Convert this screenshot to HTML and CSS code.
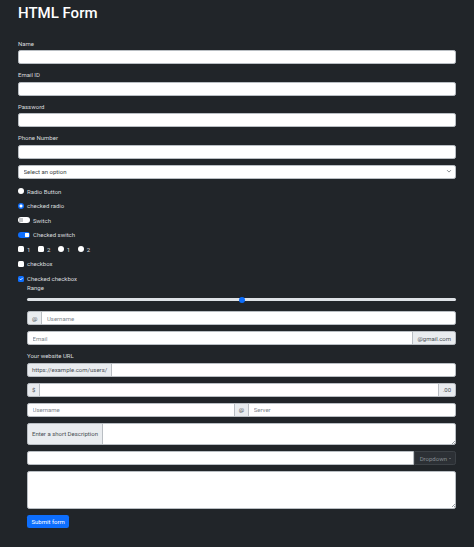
FILE: index.html
```html
<!DOCTYPE html>
<html lang="en">
<head>
<meta charset="utf-8">
<title>HTML Form</title>
<link rel="stylesheet" href="styles.css">
</head>
<body>
<div class="page">
  <h1 class="title">HTML Form</h1>
  <form class="form" onsubmit="return false">
    <div class="field">
      <label class="label" for="name">Name</label>
      <input class="control" id="name" type="text">
    </div>
    <div class="field">
      <label class="label" for="email">Email ID</label>
      <input class="control" id="email" type="email">
    </div>
    <div class="field">
      <label class="label" for="pw">Password</label>
      <input class="control" id="pw" type="password">
    </div>
    <div class="field">
      <label class="label" for="phone">Phone Number</label>
      <input class="control" id="phone" type="tel">
    </div>
    <div class="field field-select">
      <div class="select-wrap">
        <select class="control select">
          <option>Select an option</option>
          <option>One</option>
          <option>Two</option>
        </select>
        <svg class="chevron" viewBox="0 0 16 16" aria-hidden="true"><path d="M2 5l6 6 6-6" fill="none" stroke="#343a40" stroke-width="2" stroke-linecap="round" stroke-linejoin="round"/></svg>
      </div>
    </div>

    <div class="check">
      <input class="box radio" type="radio" name="r1" id="r1">
      <label for="r1">Radio Button</label>
    </div>
    <div class="check">
      <input class="box radio is-on" type="radio" name="r1" id="r2" checked>
      <label for="r2">checked radio</label>
    </div>
    <div class="check check-switch">
      <input class="switch" type="checkbox" id="s1">
      <label for="s1">Switch</label>
    </div>
    <div class="check check-switch">
      <input class="switch is-on" type="checkbox" id="s2" checked>
      <label for="s2">Checked switch</label>
    </div>
    <div class="check inline">
      <span class="inline-item"><input class="box" type="checkbox" id="i1"><label for="i1">1</label></span>
      <span class="inline-item"><input class="box" type="checkbox" id="i2"><label for="i2">2</label></span>
      <span class="inline-item"><input class="box radio" type="radio" name="ir" id="i3"><label for="i3">1</label></span>
      <span class="inline-item"><input class="box radio" type="radio" name="ir" id="i4"><label for="i4">2</label></span>
    </div>
    <div class="check">
      <input class="box" type="checkbox" id="c1">
      <label for="c1">checkbox</label>
    </div>
    <div class="check-block">
      <div class="check check-last">
        <span class="box-wrap">
          <input class="box is-on" type="checkbox" id="c2" checked>
          <svg class="tick" viewBox="0 0 20 20" aria-hidden="true"><path d="M6 10l3 3 6-6" fill="none" stroke="#fff" stroke-width="3" stroke-linecap="round" stroke-linejoin="round"/></svg>
        </span>
        <label for="c2">Checked checkbox</label>
      </div>
      <div class="nested">
        <label class="label label-range" for="rg">Range</label>
        <input class="range" type="range" id="rg" min="0" max="100" value="50">

        <div class="group">
          <span class="addon">@</span>
          <input class="control" type="text" placeholder="Username">
        </div>
        <div class="group">
          <input class="control" type="text" placeholder="Email">
          <span class="addon">@gmail.com</span>
        </div>

        <label class="label" for="url">Your website URL</label>
        <div class="group">
          <span class="addon">https://example.com/users/</span>
          <input class="control" id="url" type="text">
        </div>
        <div class="group">
          <span class="addon">$</span>
          <input class="control" type="text">
          <span class="addon">.00</span>
        </div>
        <div class="group">
          <input class="control" type="text" placeholder="Username">
          <span class="addon">@</span>
          <input class="control" type="text" placeholder="Server">
        </div>
        <div class="group group-area">
          <span class="addon">Enter a short Description</span>
          <textarea class="control area" rows="2"></textarea>
        </div>
        <div class="group">
          <input class="control" type="text">
          <button class="drop" type="button">Dropdown<span class="caret"></span></button>
        </div>
        <textarea class="control area area-big"></textarea>
        <button class="submit" type="submit">Submit form</button>
      </div>
    </div>
  </form>
</div>
</body>
</html>
```
FILE: styles.css
```css
* {
  box-sizing: border-box;
}

html {
  background: #212529;
}

body {
  margin: 0;
  background: #212529;
  color: #d9dcdf;
  font-family: Roboto, "Liberation Sans", sans-serif;
  font-size: 6px;
  line-height: 9px;
}

.page {
  padding: 3.5px 18px 18px;
}

.title {
  margin: 0 0 17px;
  font-size: 15px;
  line-height: 18px;
  font-weight: 500;
  color: #fff;
}

.form {
  margin: 0;
}

.field {
  margin-bottom: 6px;
}

.field-select {
  margin-bottom: 8px;
}

.label {
  display: block;
  margin-bottom: 2.5px;
}

.control {
  display: block;
  width: 100%;
  height: 14px;
  margin: 0;
  padding: 0 4.5px;
  border: 1px solid #b9bec3;
  border-radius: 2.25px;
  background: #fff;
  color: #212529;
  font: inherit;
  outline: none;
}

.control::placeholder {
  color: #80878d;
}

.select-wrap {
  position: relative;
}

.select {
  appearance: none;
  -webkit-appearance: none;
  color: #3a3f44;
}

.chevron {
  position: absolute;
  right: 4.5px;
  top: 4.75px;
  width: 6px;
  height: 4.5px;
  pointer-events: none;
}

.check {
  display: flex;
  align-items: flex-start;
  min-height: 9px;
  margin-bottom: 5.6px;
}

.check-last {
  margin-bottom: 0;
}

.box {
  appearance: none;
  -webkit-appearance: none;
  flex: none;
  width: 6px;
  height: 6px;
  margin: 1.5px 3px 0 0;
  border: none;
  border-radius: 1.5px;
  background: #fff;
}

.box.radio {
  border-radius: 50%;
}

.box.radio.is-on {
  background: radial-gradient(circle, #fff 0 1.4px, #0d6efd 1.7px);
}

.box.is-on {
  background-color: #0d6efd;
}

.box-wrap {
  position: relative;
  display: flex;
}

.tick {
  position: absolute;
  left: 0;
  top: 1.5px;
  width: 6px;
  height: 6px;
  pointer-events: none;
}

.switch {
  appearance: none;
  -webkit-appearance: none;
  flex: none;
  width: 12px;
  height: 6px;
  margin: 1.5px 3px 0 0;
  border: none;
  border-radius: 3px;
  background: radial-gradient(circle at 3px 3px, #c4c6c8 0 2.1px, transparent 2.4px), #fff;
}

.switch.is-on {
  background: radial-gradient(circle at 9px 3px, #fff 0 2.1px, transparent 2.4px), #0d6efd;
}

.inline-item {
  display: flex;
  align-items: flex-start;
  margin-right: 7.5px;
}

.nested {
  padding-left: 9px;
}

.label-range {
  margin-bottom: 3px;
}

.range {
  appearance: none;
  -webkit-appearance: none;
  display: block;
  width: 100%;
  height: 9px;
  margin: 0 0 7px;
  padding: 0;
  background: transparent;
}

.range::-webkit-slider-runnable-track {
  height: 2.5px;
  border-radius: 2px;
  background: #dee2e6;
}

.range::-webkit-slider-thumb {
  -webkit-appearance: none;
  appearance: none;
  width: 6px;
  height: 6px;
  margin-top: -1.75px;
  border: none;
  border-radius: 50%;
  background: #0d6efd;
}

.group {
  display: flex;
  align-items: stretch;
  height: 14px;
  margin-bottom: 6px;
}

.group .control {
  flex: 1;
  width: auto;
  min-width: 0;
  height: auto;
  border-radius: 0;
}

.addon {
  display: flex;
  align-items: center;
  flex: none;
  padding: 0 4px;
  border: 1px solid #b9bec3;
  background: #e9ecef;
  color: #4a5055;
  white-space: nowrap;
}

.group > :first-child {
  border-top-left-radius: 2.25px;
  border-bottom-left-radius: 2.25px;
}

.group > :last-child {
  border-top-right-radius: 2.25px;
  border-bottom-right-radius: 2.25px;
}

.group > * + * {
  margin-left: -1px;
}

.group-area {
  height: 22.7px;
}

.area {
  padding: 2.25px 4.5px;
  resize: none;
  background:
    linear-gradient(135deg, transparent 0 55%, #9aa0a5 55% 65%, transparent 65% 80%, #9aa0a5 80% 90%, transparent 90%) right 0.5px bottom 0.5px / 4px 4px no-repeat,
    #fff;
}

.area-big {
  height: 37.5px;
  margin-bottom: 6px;
}

.drop {
  display: flex;
  align-items: center;
  flex: none;
  margin: 0;
  padding: 0 4.5px;
  border: 1px solid #3c4146;
  background: #2c3035;
  color: #858c92;
  font: inherit;
}

.caret {
  display: inline-block;
  margin-left: 1.5px;
  border-top: 1.8px solid #858c92;
  border-left: 1.8px solid transparent;
  border-right: 1.8px solid transparent;
}

.submit {
  display: block;
  height: 13.6px;
  margin: 0;
  padding: 0 4.5px;
  border: none;
  border-radius: 2.25px;
  background: #0d6efd;
  color: #fff;
  font: inherit;
}
```
